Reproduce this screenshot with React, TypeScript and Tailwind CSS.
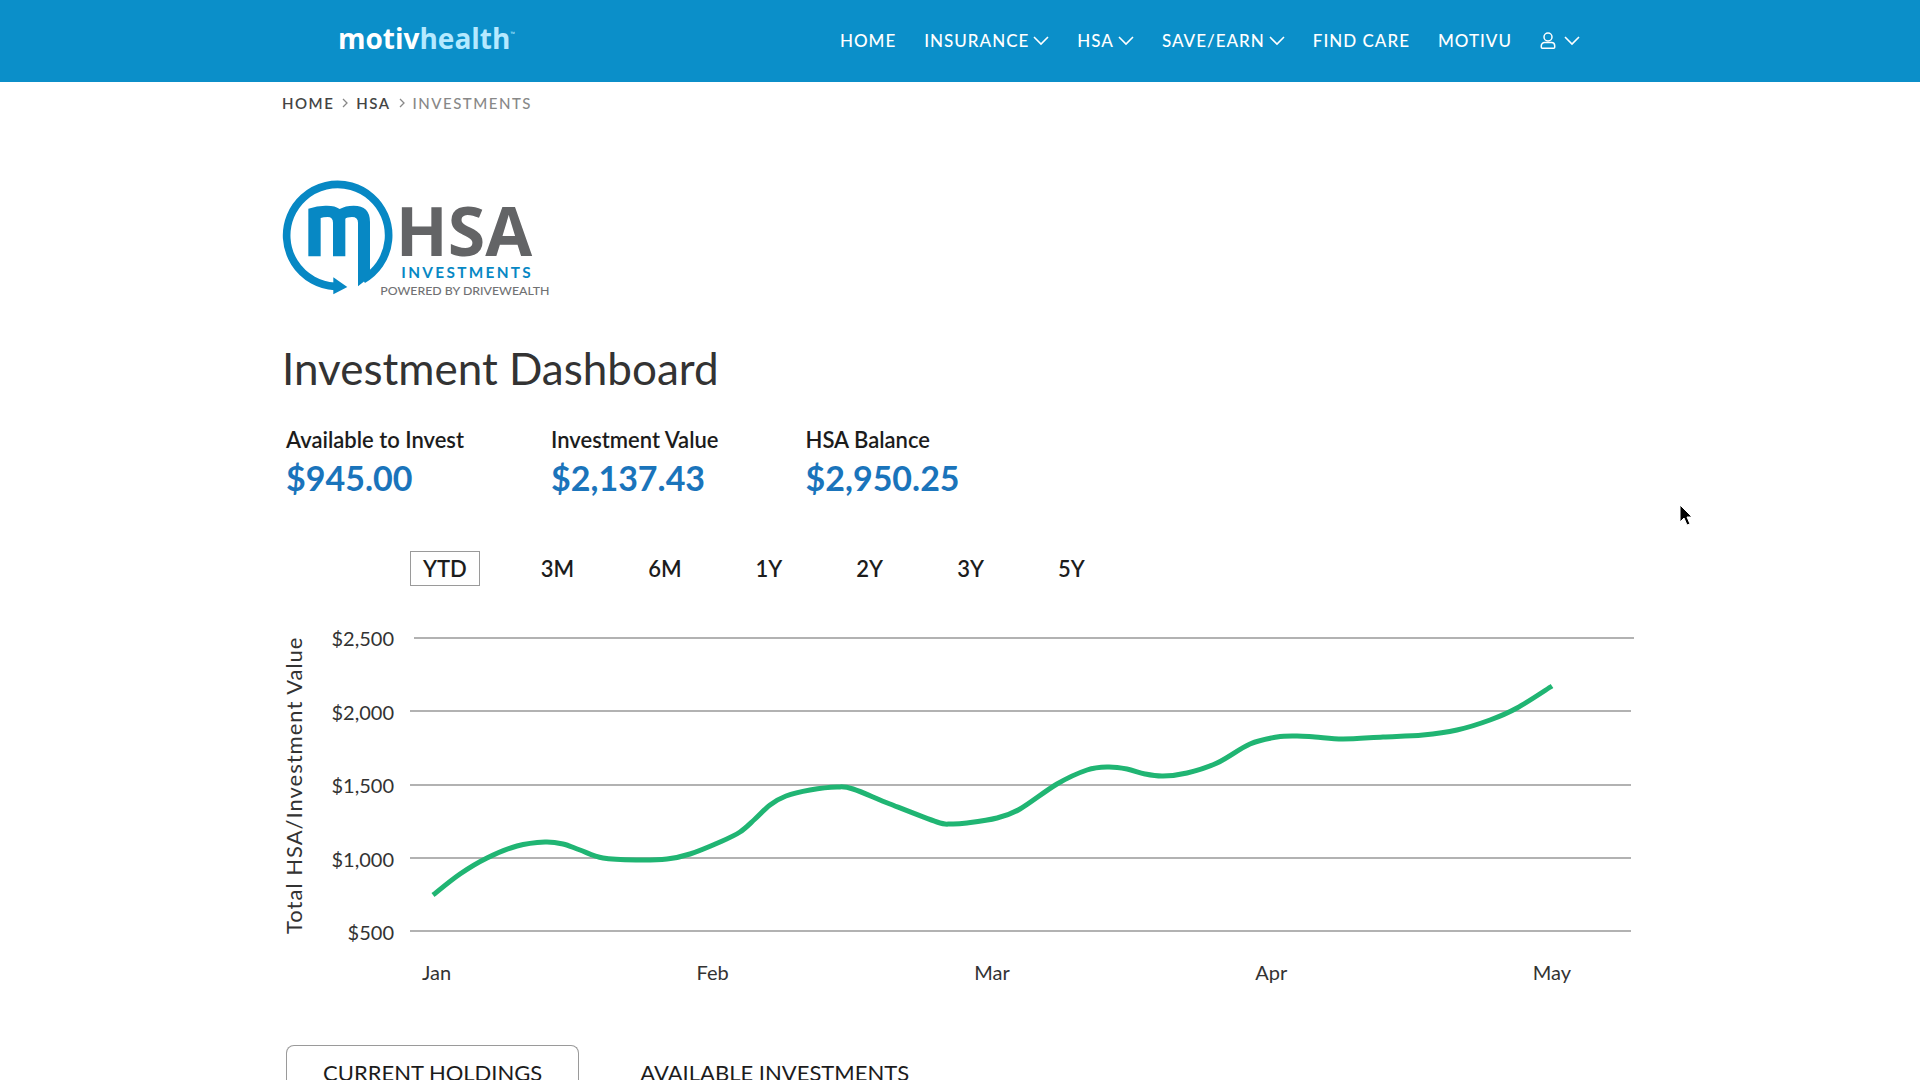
import { useState } from 'react';

const NAV_ITEMS = [
  { label: 'HOME', menu: false },
  { label: 'INSURANCE', menu: true },
  { label: 'HSA', menu: true },
  { label: 'SAVE/EARN', menu: true },
  { label: 'FIND CARE', menu: false },
  { label: 'MOTIVU', menu: false },
];

const BALANCES = [
  { label: 'Available to Invest', value: '$945.00' },
  { label: 'Investment Value', value: '$2,137.43' },
  { label: 'HSA Balance', value: '$2,950.25' },
];

const RANGES = ['YTD', '3M', '6M', '1Y', '2Y', '3Y', '5Y'];
const VALUE_TICKS = ['$2,500', '$2,000', '$1,500', '$1,000', '$500'];
const MONTHS = ['Jan', 'Feb', 'Mar', 'Apr', 'May'];

// plot coordinates inside the 1228 x 314 chart
const POINTS: [number, number][] = [
  [23, 267], [50, 246], [77, 230], [107, 218], [135, 214], [153, 216], [170, 222], [193, 230],
  [227, 232], [257, 231], [280, 226], [310, 214], [330, 204], [345, 191], [360, 177], [376, 168],
  [400, 162], [427, 159], [443, 161], [480, 176], [527, 194], [541, 196], [557, 195], [587, 190],
  [610, 181], [647, 156], [677, 142], [698, 139], [717, 141], [735, 146], [753, 148], [777, 145],
  [807, 135], [840, 116], [867, 109], [887, 108], [905, 109], [933, 111], [973, 109],
  [1013, 107], [1047, 102], [1080, 92], [1107, 80], [1142, 58],
];

function smoothPath(points: [number, number][]) {
  let d = `M${points[0][0]} ${points[0][1]}`;
  for (let i = 0; i < points.length - 1; i++) {
    const p0 = points[i - 1] ?? points[i];
    const p1 = points[i];
    const p2 = points[i + 1];
    const p3 = points[i + 2] ?? p2;
    d += ` C${p1[0] + (p2[0] - p0[0]) / 6} ${p1[1] + (p2[1] - p0[1]) / 6}`;
    d += ` ${p2[0] - (p3[0] - p1[0]) / 6} ${p2[1] - (p3[1] - p1[1]) / 6} ${p2[0]} ${p2[1]}`;
  }
  return d;
}

export default function App() {
  const [range, setRange] = useState('YTD');
  const [tab, setTab] = useState('CURRENT HOLDINGS');

  return (
    <div className="relative h-screen overflow-hidden bg-white font-['Lato',sans-serif] text-[#1c1c1c]">
      <SiteHeader />

      <main className="mx-auto max-w-[1356px]">
        <Breadcrumbs />
        <InvestmentsLogo />

        <h1 className="mt-11 text-[44px] leading-[52px] text-[#333]">Investment Dashboard</h1>

        <dl className="mt-8 flex gap-[87px] pl-1">
          {BALANCES.map((item) => (
            <div key={item.label}>
              <dt className="text-[22px] leading-7 font-semibold">{item.label}</dt>
              <dd className="mt-1 text-[34px] leading-10 font-bold text-[#1a74bb]">{item.value}</dd>
            </div>
          ))}
        </dl>

        <div className="mt-[53px] flex gap-12 pl-32">
          {RANGES.map((item) => (
            <button
              key={item}
              type="button"
              onClick={() => setRange(item)}
              className={`h-[35px] border px-3 text-[22px] leading-8 font-semibold ${
                item === range ? 'border-[#9a9a9a]' : 'border-transparent'
              }`}
            >
              {item}
            </button>
          ))}
        </div>

        <ValueChart />

        <div role="tablist" className="mt-[59px] flex gap-6 pl-1">
          {['CURRENT HOLDINGS', 'AVAILABLE INVESTMENTS'].map((item) => (
            <button
              key={item}
              type="button"
              role="tab"
              aria-selected={item === tab}
              onClick={() => setTab(item)}
              className={`h-[54px] rounded-t-lg border border-b-0 px-9 text-[22px] ${
                item === tab ? 'border-[#9a9a9a]' : 'border-transparent'
              }`}
            >
              {item}
            </button>
          ))}
        </div>
      </main>

      <Pointer />
    </div>
  );
}

function SiteHeader() {
  return (
    <header className="bg-[#0b8fc9] text-white">
      <div className="mx-auto flex h-[82px] max-w-[1244px] items-center justify-between">
        <a href="#" className="flex items-center pb-1.5 font-['Open_Sans',sans-serif] text-[28px] leading-10 font-bold">
          motiv<span className="text-[#b5e9ff]">health</span>
          <span className="pb-2 text-[6px] leading-3 font-normal text-[#b5e9ff]">™</span>
        </a>
        <nav className="flex items-center gap-7 pr-0.5 text-[17px] font-medium tracking-[1px]">
          {NAV_ITEMS.map((item) => (
            <a key={item.label} href="#" className="flex items-center gap-1">
              {item.label}
              {item.menu ? <Chevron /> : null}
            </a>
          ))}
          <button type="button" aria-label="Account" className="flex items-center gap-2">
            <svg viewBox="0 0 16 18" className="h-[18px] w-4" fill="none" stroke="currentColor" strokeWidth="1.5">
              <circle cx="8" cy="5" r="4" />
              <path d="M4.500 10.500h7a3.200 3.200 0 0 1 3.200 3.200v1.600a1 1 0 0 1-1 1H2.300a1 1 0 0 1-1-1v-1.600a3.200 3.200 0 0 1 3.200-3.200z" />
            </svg>
            <Chevron />
          </button>
        </nav>
      </div>
    </header>
  );
}

function Chevron() {
  return (
    <svg viewBox="0 0 16 10" className="h-[10px] w-4" fill="none" stroke="currentColor" strokeWidth="1.6">
      <path d="M1 1l7 7 7-7" />
    </svg>
  );
}

function Breadcrumbs() {
  return (
    <nav
      aria-label="Breadcrumb"
      className="flex h-[42px] items-center gap-[7px] text-[15px] font-semibold tracking-widest text-[#444]"
    >
      <a href="#">HOME</a>
      <Separator />
      <a href="#">HSA</a>
      <Separator />
      <span className="font-medium text-[#888]">INVESTMENTS</span>
    </nav>
  );
}

function Separator() {
  return (
    <svg viewBox="0 0 8 12" className="h-3 w-2" fill="none" stroke="#888" strokeWidth="1.3">
      <path d="M2 2l4 4-4 4" />
    </svg>
  );
}

function InvestmentsLogo() {
  return (
    <svg viewBox="0 0 810 360" className="mt-[54px] h-[120px] w-[270px]" role="img" aria-label="HSA Investments">
      <g fill="#0788c4">
        {/* ring */}
        <path d="M158 325 A153 153 0 1 1 243 305" fill="none" stroke="#0788c4" strokeWidth="23" />
        <path d="M154 298 L196 327 L154 349 Z" />
        {/* monogram */}
        <path d="M79 92 Q108 82 135 83 Q160 83 173 93 Q190 83 215 83 Q264 83 264 132 V296 L228 325 V134 Q228 117 210 117 Q194 117 190 122 V235 H153 V134 Q153 117 137 117 Q124 117 116 120 V235 H79 Z" />
      </g>
      <text x="341" y="234" fontSize="204" fontWeight="700" fill="#636466" className="font-['Open_Sans',sans-serif]">
        HSA
      </text>
      <text x="358" y="299" fontSize="46" fontWeight="700" letterSpacing="7" fill="#0788c4">
        INVESTMENTS
      </text>
      <text x="295" y="352" fontSize="37" fontWeight="500" fill="#707173">
        POWERED BY DRIVEWEALTH
      </text>
    </svg>
  );
}

function ValueChart() {
  return (
    <section className="mt-[42px] grid grid-cols-[24px_88px_1fr] text-xl text-[#333]">
      <div className="flex rotate-180 items-center justify-center text-[22px] leading-6 tracking-[1px] whitespace-nowrap [writing-mode:vertical-rl]">
        Total HSA/Investment Value
      </div>
      <div className="flex flex-col justify-between text-right leading-5">
        {VALUE_TICKS.map((tick) => (
          <span key={tick}>{tick}</span>
        ))}
      </div>
      <svg viewBox="0 0 1228 314" className="ml-4 w-[calc(100%-16px)]" fill="none">
        <g stroke="#b2b2b2" strokeWidth="2">
          <path d="M4 10H1224" />
          <path d="M0 83H1221" />
          <path d="M0 157H1221" />
          <path d="M0 230H1221" />
          <path d="M0 303H1221" />
        </g>
        <path d={smoothPath(POINTS)} stroke="#20b573" strokeWidth="5" />
      </svg>
      <div className="col-start-3 mt-4 flex justify-between pr-[67px] pl-7">
        {MONTHS.map((month) => (
          <span key={month}>{month}</span>
        ))}
      </div>
    </section>
  );
}

function Pointer() {
  return (
    <svg viewBox="0 0 14 22" className="absolute top-[504px] left-[1679px] h-[22px] w-[14px]">
      <path d="M1 1v17l4-4 3 7 3-1-3-7h5z" fill="#000" stroke="#fff" strokeWidth="1" />
    </svg>
  );
}
